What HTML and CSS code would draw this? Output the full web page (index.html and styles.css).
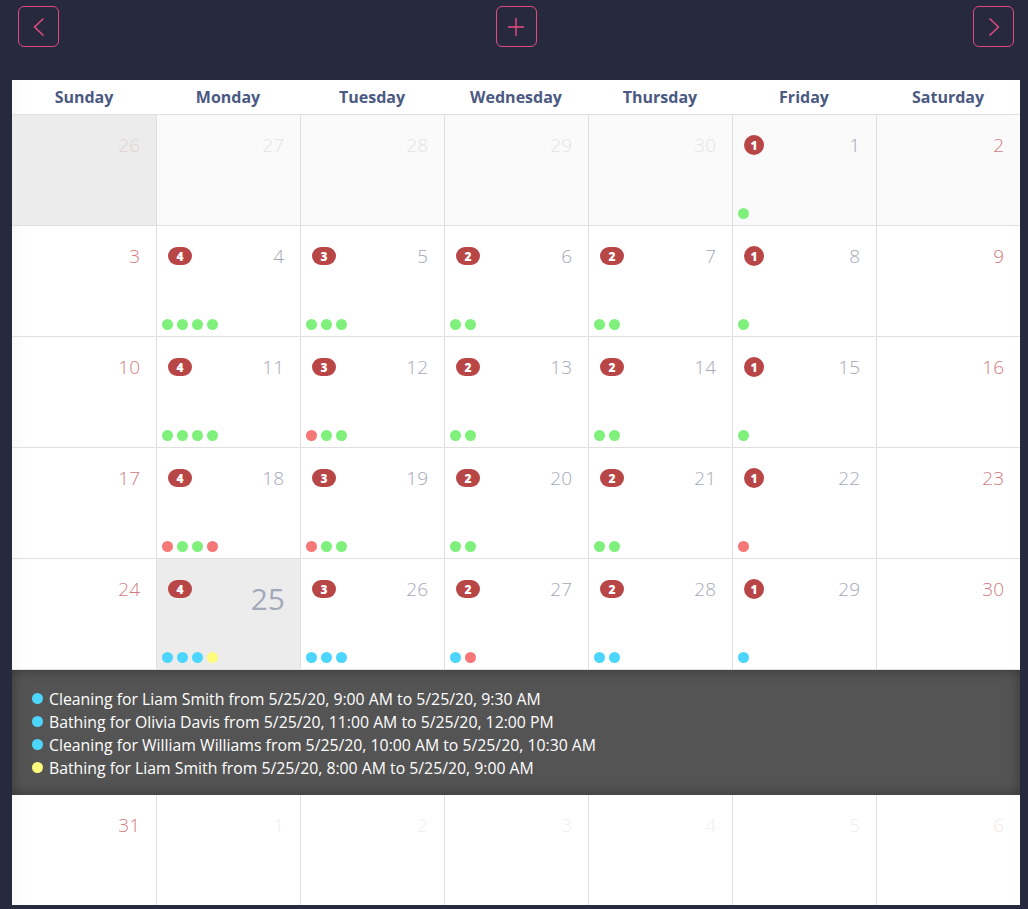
FILE: index.html
```html
<!DOCTYPE html>
<html lang="en">
<head>
<meta charset="utf-8">
<title>Calendar</title>
<link rel="stylesheet" href="styles.css">
</head>
<body>
<div class="page">
  <div class="topbar">
    <button class="navbtn" aria-label="Previous">
      <svg width="20" height="20" viewBox="0 0 20 20"><path d="M14.5 1.5 L5.5 10 L14.5 18.5" fill="none" stroke="#ea4c82" stroke-width="1.4"/></svg>
    </button>
    <button class="navbtn" aria-label="Add">
      <svg width="20" height="20" viewBox="0 0 20 20"><path d="M10 1 V19 M2 10 H18" fill="none" stroke="#ea4c82" stroke-width="1.4"/></svg>
    </button>
    <button class="navbtn" aria-label="Next">
      <svg width="20" height="20" viewBox="0 0 20 20"><path d="M5.5 1.5 L14.5 10 L5.5 18.5" fill="none" stroke="#ea4c82" stroke-width="1.4"/></svg>
    </button>
  </div>

  <div class="calendar">
    <div class="dow">Sunday</div>
    <div class="dow">Monday</div>
    <div class="dow">Tuesday</div>
    <div class="dow">Wednesday</div>
    <div class="dow">Thursday</div>
    <div class="dow">Friday</div>
    <div class="dow">Saturday</div>

    <!-- week 1 -->
    <div class="cell first prev-sel weekend other"><div class="top"><span></span><span class="num">26</span></div><div class="dots"></div></div>
    <div class="cell prev other"><div class="top"><span></span><span class="num">27</span></div><div class="dots"></div></div>
    <div class="cell prev other"><div class="top"><span></span><span class="num">28</span></div><div class="dots"></div></div>
    <div class="cell prev other"><div class="top"><span></span><span class="num">29</span></div><div class="dots"></div></div>
    <div class="cell prev other"><div class="top"><span></span><span class="num">30</span></div><div class="dots"></div></div>
    <div class="cell prev"><div class="top"><span class="badge round">1</span><span class="num">1</span></div><div class="dots"><i class="dot g"></i></div></div>
    <div class="cell prev weekend"><div class="top"><span></span><span class="num">2</span></div><div class="dots"></div></div>

    <!-- week 2 -->
    <div class="cell first weekend"><div class="top"><span></span><span class="num">3</span></div><div class="dots"></div></div>
    <div class="cell"><div class="top"><span class="badge">4</span><span class="num">4</span></div><div class="dots"><i class="dot g"></i><i class="dot g"></i><i class="dot g"></i><i class="dot g"></i></div></div>
    <div class="cell"><div class="top"><span class="badge">3</span><span class="num">5</span></div><div class="dots"><i class="dot g"></i><i class="dot g"></i><i class="dot g"></i></div></div>
    <div class="cell"><div class="top"><span class="badge">2</span><span class="num">6</span></div><div class="dots"><i class="dot g"></i><i class="dot g"></i></div></div>
    <div class="cell"><div class="top"><span class="badge">2</span><span class="num">7</span></div><div class="dots"><i class="dot g"></i><i class="dot g"></i></div></div>
    <div class="cell"><div class="top"><span class="badge round">1</span><span class="num">8</span></div><div class="dots"><i class="dot g"></i></div></div>
    <div class="cell weekend"><div class="top"><span></span><span class="num">9</span></div><div class="dots"></div></div>

    <!-- week 3 -->
    <div class="cell first weekend"><div class="top"><span></span><span class="num">10</span></div><div class="dots"></div></div>
    <div class="cell"><div class="top"><span class="badge">4</span><span class="num">11</span></div><div class="dots"><i class="dot g"></i><i class="dot g"></i><i class="dot g"></i><i class="dot g"></i></div></div>
    <div class="cell"><div class="top"><span class="badge">3</span><span class="num">12</span></div><div class="dots"><i class="dot r"></i><i class="dot g"></i><i class="dot g"></i></div></div>
    <div class="cell"><div class="top"><span class="badge">2</span><span class="num">13</span></div><div class="dots"><i class="dot g"></i><i class="dot g"></i></div></div>
    <div class="cell"><div class="top"><span class="badge">2</span><span class="num">14</span></div><div class="dots"><i class="dot g"></i><i class="dot g"></i></div></div>
    <div class="cell"><div class="top"><span class="badge round">1</span><span class="num">15</span></div><div class="dots"><i class="dot g"></i></div></div>
    <div class="cell weekend"><div class="top"><span></span><span class="num">16</span></div><div class="dots"></div></div>

    <!-- week 4 -->
    <div class="cell first weekend"><div class="top"><span></span><span class="num">17</span></div><div class="dots"></div></div>
    <div class="cell"><div class="top"><span class="badge">4</span><span class="num">18</span></div><div class="dots"><i class="dot r"></i><i class="dot g"></i><i class="dot g"></i><i class="dot r"></i></div></div>
    <div class="cell"><div class="top"><span class="badge">3</span><span class="num">19</span></div><div class="dots"><i class="dot r"></i><i class="dot g"></i><i class="dot g"></i></div></div>
    <div class="cell"><div class="top"><span class="badge">2</span><span class="num">20</span></div><div class="dots"><i class="dot g"></i><i class="dot g"></i></div></div>
    <div class="cell"><div class="top"><span class="badge">2</span><span class="num">21</span></div><div class="dots"><i class="dot g"></i><i class="dot g"></i></div></div>
    <div class="cell"><div class="top"><span class="badge round">1</span><span class="num">22</span></div><div class="dots"><i class="dot r"></i></div></div>
    <div class="cell weekend"><div class="top"><span></span><span class="num">23</span></div><div class="dots"></div></div>

    <!-- week 5 -->
    <div class="cell first weekend"><div class="top"><span></span><span class="num">24</span></div><div class="dots"></div></div>
    <div class="cell today"><div class="top"><span class="badge">4</span><span class="num">25</span></div><div class="dots"><i class="dot b"></i><i class="dot b"></i><i class="dot b"></i><i class="dot y"></i></div></div>
    <div class="cell"><div class="top"><span class="badge">3</span><span class="num">26</span></div><div class="dots"><i class="dot b"></i><i class="dot b"></i><i class="dot b"></i></div></div>
    <div class="cell"><div class="top"><span class="badge">2</span><span class="num">27</span></div><div class="dots"><i class="dot b"></i><i class="dot r"></i></div></div>
    <div class="cell"><div class="top"><span class="badge">2</span><span class="num">28</span></div><div class="dots"><i class="dot b"></i><i class="dot b"></i></div></div>
    <div class="cell"><div class="top"><span class="badge round">1</span><span class="num">29</span></div><div class="dots"><i class="dot b"></i></div></div>
    <div class="cell weekend"><div class="top"><span></span><span class="num">30</span></div><div class="dots"></div></div>

    <div class="details">
      <div class="event"><i class="dot b"></i>Cleaning for Liam Smith from 5/25/20, 9:00 AM to 5/25/20, 9:30 AM</div>
      <div class="event"><i class="dot b"></i>Bathing for Olivia Davis from 5/25/20, 11:00 AM to 5/25/20, 12:00 PM</div>
      <div class="event"><i class="dot b"></i>Cleaning for William Williams from 5/25/20, 10:00 AM to 5/25/20, 10:30 AM</div>
      <div class="event"><i class="dot y"></i>Bathing for Liam Smith from 5/25/20, 8:00 AM to 5/25/20, 9:00 AM</div>
    </div>

    <!-- week 6 -->
    <div class="cell first weekend last"><div class="top"><span></span><span class="num">31</span></div><div class="dots"></div></div>
    <div class="cell next last"><div class="top"><span></span><span class="num">1</span></div><div class="dots"></div></div>
    <div class="cell next last"><div class="top"><span></span><span class="num">2</span></div><div class="dots"></div></div>
    <div class="cell next last"><div class="top"><span></span><span class="num">3</span></div><div class="dots"></div></div>
    <div class="cell next last"><div class="top"><span></span><span class="num">4</span></div><div class="dots"></div></div>
    <div class="cell next last"><div class="top"><span></span><span class="num">5</span></div><div class="dots"></div></div>
    <div class="cell next weekend last"><div class="top"><span></span><span class="num">6</span></div><div class="dots"></div></div>
  </div>
</div>
</body>
</html>
```

FILE: styles.css
```css
* { box-sizing: border-box; }

html, body {
  margin: 0;
  padding: 0;
  background: #272a3e;
  height: 100%;
}

body {
  font-family: "Open Sans", "DejaVu Sans", sans-serif;
  overflow: hidden;
}

.page {
  padding: 0 8px 0 12px;
}

.topbar {
  height: 80px;
  display: flex;
  justify-content: space-between;
  align-items: flex-start;
  padding: 6px 6px 0 6px;
}

.navbtn {
  width: 41px;
  height: 41px;
  border: 1px solid #e44a80;
  border-radius: 6px;
  background: transparent;
  display: flex;
  align-items: center;
  justify-content: center;
  padding: 0;
  cursor: pointer;
}

.calendar {
  width: 1008px;
  background: #ffffff;
  display: grid;
  grid-template-columns: repeat(7, 1fr);
  box-shadow: inset 18px 0 14px -12px rgba(0, 0, 0, 0.035);
}

.dow {
  height: 34px;
  display: flex;
  align-items: center;
  justify-content: center;
  font-weight: 700;
  font-size: 16px;
  color: #4b5a82;
}

.cell {
  height: 111px;
  border-top: 1px solid #e0e0e0;
  border-left: 1px solid #e0e0e0;
  display: flex;
  flex-direction: column;
  justify-content: space-between;
}

.cell.first { border-left: none; }
.cell.last { height: 110px; border-top: none; }

.cell.prev { background: #fafafa; }
.cell.prev-sel { background: #ececec; }
.cell.today { background: #ececec; }

.top {
  display: flex;
  justify-content: space-between;
  align-items: flex-start;
  padding: 18px 16px 0 11px;
}

.num {
  font-size: 19px;
  line-height: 24px;
  font-weight: 300;
  color: #a4a9b9;
}

.weekend .num { color: #d17c7f; }
.other .num { color: #e4e4e4; }
.prev-sel .num { color: #e3d3d3; }
.next .num { color: #efefef; }
.next.weekend .num { color: #f5e6e6; }

.today .num {
  font-size: 30px;
  line-height: 30px;
  margin-top: 7px;
  font-weight: 400;
  margin-right: -1px;
}

.badge {
  margin-top: 3px;
  min-width: 24px;
  height: 18px;
  padding: 0 6px;
  border-radius: 9px;
  background: #b84646;
  color: #ffffff;
  font-size: 12px;
  font-weight: 800;
  display: inline-flex;
  align-items: center;
  justify-content: center;
}

.badge.round {
  min-width: 20px;
  width: 20px;
  height: 20px;
  border-radius: 10px;
  margin-top: 2px;
  padding: 0;
}

.dots {
  display: flex;
  gap: 4px;
  padding: 0 0 6px 5px;
  min-height: 17px;
}

.dot {
  display: inline-block;
  width: 11px;
  height: 11px;
  border-radius: 50%;
  flex: none;
}

.dot.g { background: #80f07c; }
.dot.r { background: #f57777; }
.dot.b { background: #4cd6fd; }
.dot.y { background: #fffb7d; }

.details {
  grid-column: 1 / -1;
  height: 126px;
  background: #545454;
  box-shadow: inset 0 0 14px rgba(0, 0, 0, 0.35);
  padding: 17px 20px;
  color: #ffffff;
  font-size: 15.8px;
  border-top: 1px solid #e0e0e0;
}

.event {
  display: flex;
  align-items: center;
  height: 23px;
  white-space: nowrap;
}

.event .dot {
  margin-right: 6px;
}
```
